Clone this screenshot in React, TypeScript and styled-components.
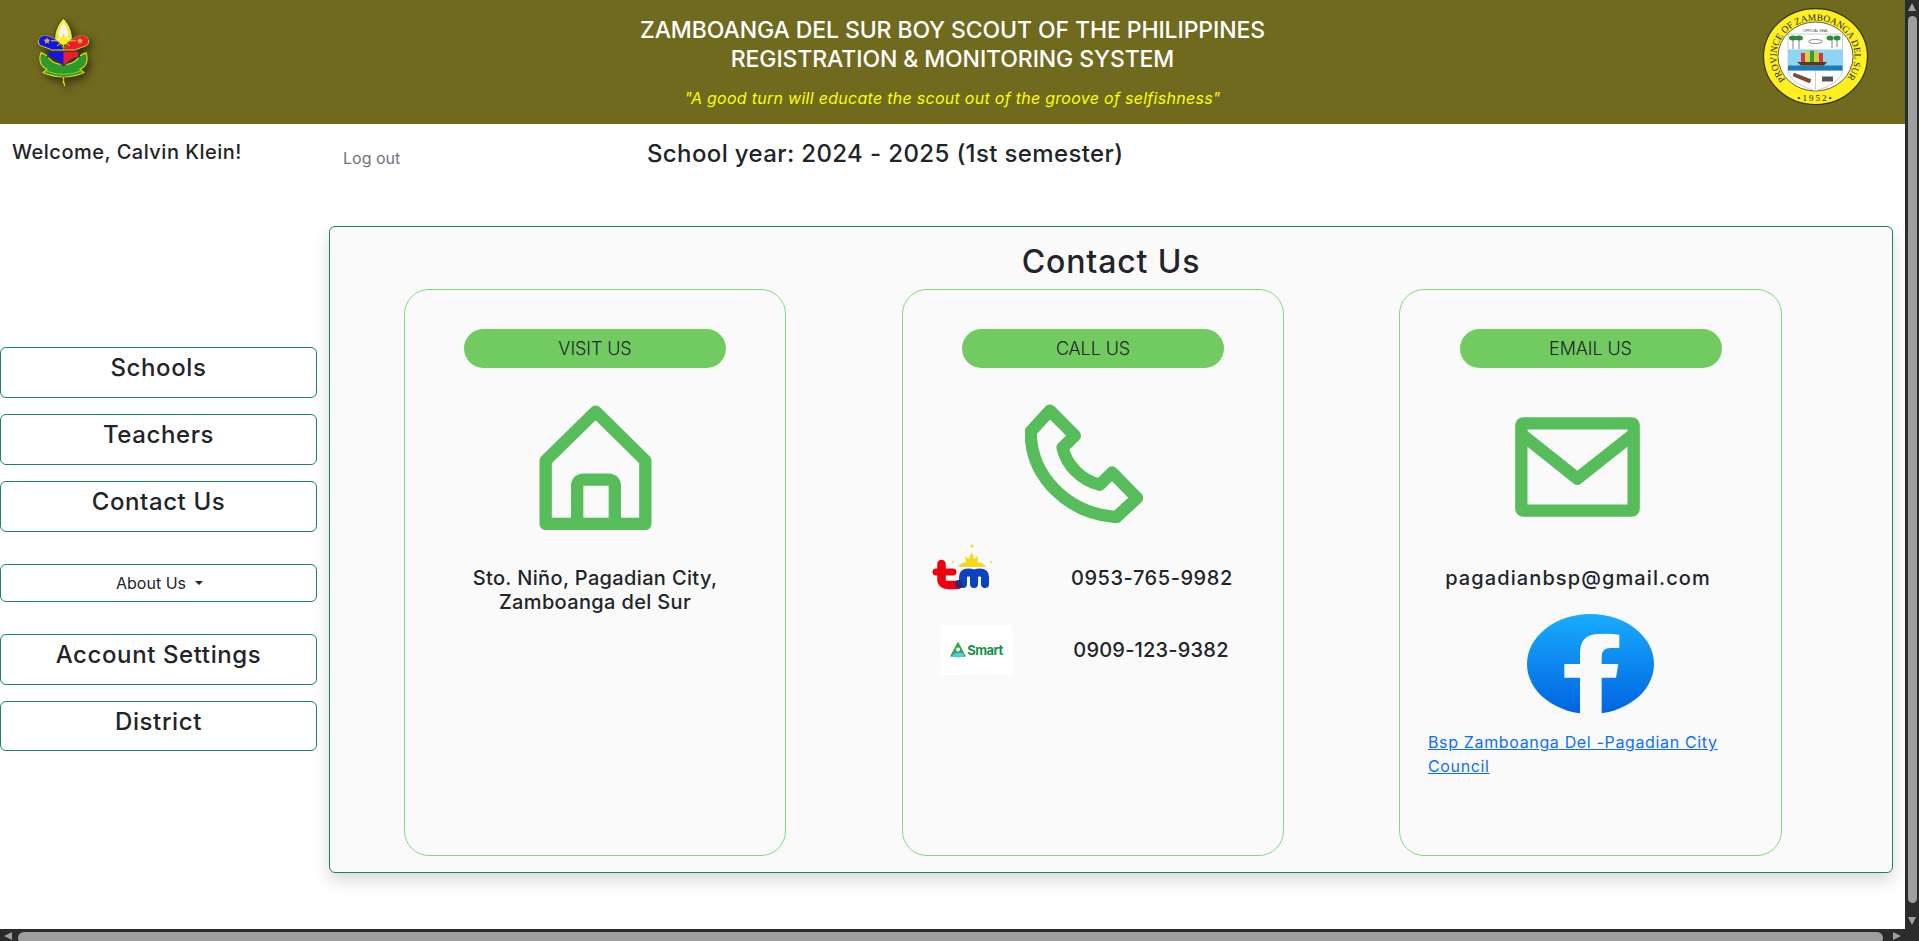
import React from "react";
import styled, { createGlobalStyle } from "styled-components";

const GlobalStyle = createGlobalStyle`
html, body {
  margin: 0;
  padding: 0;
  height: 100%;
  overflow: hidden;
  background: #fff;
}
* { box-sizing: border-box; }
body {
  font-family: Inter, "Open Sans", sans-serif;
  color: #212529;
}
`;

const Shell = styled.div`
display: grid;
grid-template-columns: 1905px 14px;
grid-template-rows: 929px 12px;
width: 1919px;
height: 941px;
overflow: hidden;
`;

const Page = styled.div`
display: flex;
flex-direction: column;
overflow: hidden;
`;

const VBar = styled.div`
grid-row: 1 / 3;
grid-column: 2;
background: #2b2b2b;
display: flex;
flex-direction: column;
align-items: center;
padding: 3px 0 16px;
`;

const VThumb = styled.div`
width: 9px;
flex: 1;
margin: 5px 0 14px;
background: #9f9f9f;
border-radius: 5px;
`;

const HBar = styled.div`
background: #2b2b2b;
display: flex;
align-items: flex-start;
padding: 3px 4px 0;
`;

const HThumb = styled.div`
height: 12px;
flex: 1;
margin: 0 10px 0 6px;
background: #9f9f9f;
border-radius: 6px;
`;

const Arrow = styled.div<{ $dir: "up" | "down" | "left" | "right" }>`
width: 0;
height: 0;
flex: none;
border-style: solid;
border-color: transparent;
${({ $dir }) =>
  $dir === "up"
    ? "border-width: 0 4.5px 8px; border-bottom-color: #9f9f9f;"
    : $dir === "down"
    ? "border-width: 8px 4.5px 0; border-top-color: #9f9f9f;"
    : $dir === "left"
    ? "border-width: 4.5px 8px 4.5px 0; border-right-color: #9f9f9f;"
    : "border-width: 4.5px 0 4.5px 8px; border-left-color: #9f9f9f;"}
`;

const Header = styled.header`
height: 124px;
flex: none;
background: #706a1f;
display: grid;
grid-template-columns: 1fr auto 1fr;
align-items: start;
padding: 0 37px;
`;

const BspLogo = styled.svg`
width: 53px;
height: 71px;
margin-top: 17px;
filter: drop-shadow(3px 4px 4px rgba(0, 0, 0, 0.55));
`;

const SealLogo = styled.svg`
width: 105px;
height: 97px;
margin-top: 8px;
justify-self: end;
`;

const HeaderText = styled.div`
display: flex;
flex-direction: column;
align-items: center;
color: #fff;
padding-top: 16px;
`;

const HeaderTitle = styled.h1`
margin: 0;
font-size: 23px;
line-height: 29px;
font-weight: 500;
text-align: center;
letter-spacing: -0.1px;
`;

const Motto = styled.p`
margin: 12px 0 0;
font-size: 16px;
line-height: 24px;
font-style: italic;
color: #ffff00;
letter-spacing: 0.28px;
`;

const Body = styled.div`
display: flex;
flex: 1;
`;

const Sidebar = styled.aside`
width: 318px;
flex: none;
`;

const Welcome = styled.div`
height: 223px;
padding: 15px 0 0 12px;
font-size: 20px;
line-height: 27px;
font-weight: 500;
letter-spacing: 0.5px;
`;

const NavList = styled.nav`
display: flex;
flex-direction: column;
gap: 16px;
`;

const NavButton = styled.a<{ $short?: boolean }>`
display: block;
height: ${({ $short }) => ($short ? 50 : 51)}px;
width: 317px;
border: 1px solid #198754;
border-radius: 6px;
text-align: center;
font-size: 24px;
line-height: 29px;
font-weight: 500;
letter-spacing: 0.6px;
padding-top: 5px;
color: #212529;
`;

const AboutButton = styled.button`
display: flex;
align-items: center;
justify-content: center;
gap: 9px;
height: 38px;
width: 317px;
margin: 16px 0;
background: #fff;
border: 1px solid #198754;
border-radius: 6px;
font-family: inherit;
font-size: 16px;
color: #212529;
padding: 0 0 0 2px;
`;

const Caret = styled.span`
width: 0;
height: 0;
border-style: solid;
border-width: 4.5px 4.5px 0;
border-color: #212529 transparent transparent;
`;

const Main = styled.main`
flex: 1;
padding-left: 11px;
`;

const TopRow = styled.div`
height: 102px;
display: flex;
align-items: flex-start;
padding-left: 14px;
`;

const LogOut = styled.a`
width: 304px;
margin-top: 22px;
font-size: 16px;
line-height: 24px;
color: #6c757d;
`;

const SchoolYear = styled.div`
margin-top: 15px;
font-size: 24px;
line-height: 29px;
font-weight: 500;
letter-spacing: 0.37px;
`;

const ContactPanel = styled.section`
width: 1564px;
height: 647px;
background: #fafafa;
border: 1px solid #198754;
border-radius: 6px;
box-shadow: 0 8px 16px rgba(0, 0, 0, 0.15);
padding-top: 16px;
`;

const PanelTitle = styled.h2`
margin: 0 0 8px;
font-size: 32px;
line-height: 38px;
font-weight: 500;
letter-spacing: 0.85px;
text-align: center;
`;

const CardRow = styled.div`
display: flex;
gap: 116px;
padding-left: 74px;
`;

const Card = styled.article<{ $pull?: number }>`
width: ${({ $pull }) => 382 + ($pull ?? 0)}px;
margin-left: ${({ $pull }) => -($pull ?? 0)}px;
height: 567px;
border: 1px solid #7ddc7a;
border-radius: 25px;
padding-top: 39px;
`;

const Pill = styled.div`
width: 262px;
height: 39px;
margin: 0 auto;
background: #72cb60;
border-radius: 20px;
text-align: center;
font-size: 18px;
line-height: 39px;
font-weight: 300;
letter-spacing: -0.1px;
`;

const IconSlot = styled.div<{ $height: number; $shift?: number; $top?: number }>`
height: ${({ $height }) => $height}px;
display: flex;
align-items: center;
justify-content: center;
margin-right: ${({ $shift }) => $shift ?? 0}px;
padding-top: ${({ $top }) => $top ?? 0}px;
`;

const InfoText = styled.p<{ $spacing?: number }>`
margin: 0;
font-size: 20px;
line-height: 24px;
font-weight: 500;
text-align: center;
white-space: nowrap;
letter-spacing: ${({ $spacing }) => $spacing ?? 0.35}px;
`;

const PhoneRow = styled.div<{ $mt?: number }>`
display: flex;
align-items: center;
margin-top: ${({ $mt }) => $mt ?? 0}px;
`;

const LogoCell = styled.div<{ $pad: number }>`
width: 168px;
flex: none;
display: flex;
padding-left: ${({ $pad }) => $pad}px;
`;

const PhoneNumber = styled.div<{ $mt?: number; $spacing?: number }>`
width: 160px;
margin-top: ${({ $mt }) => $mt ?? 0}px;
font-size: 20px;
line-height: 24px;
font-weight: 500;
text-align: center;
white-space: nowrap;
letter-spacing: ${({ $spacing }) => $spacing ?? 0.2}px;
`;

const SmartBox = styled.div`
width: 71px;
height: 50px;
background: #fff;
display: flex;
align-items: center;
justify-content: center;
gap: 1px;
color: #17924a;
font-size: 13px;
font-weight: 700;
letter-spacing: -0.5px;
`;

const EmailColumn = styled.div`
width: 300px;
margin-left: 28px;
`;

const FbLogo = styled.svg`
display: block;
width: 127px;
height: 100px;
margin: 24px 0 0 127px;
`;

const FbLink = styled.a`
display: block;
margin: 16px 0 0 28px;
width: 320px;
font-size: 16px;
line-height: 24px;
letter-spacing: 0.65px;
color: #0d6efd;
text-decoration: underline;
`;

const GREEN = "#56bd5a";

const HouseIcon = () => (
  <svg width="113" height="125" viewBox="0 0 337 375" fill="none" stroke={GREEN} strokeWidth="37" strokeLinejoin="round">
    <path d="M169 20 L19 167 V357 H318 V167 Z" />
    <path d="M113.500 357 V244 Q113.500 224 133 224 H207 Q226.500 224 226.500 244 V357" />
  </svg>
);

const PhoneIcon = () => (
  <svg width="118" height="119" viewBox="0 0 355 358" fill="none" stroke={GREEN} strokeWidth="37" strokeLinejoin="round">
    <path d="M75 20 L150 95 L113 131 C125 185 170 230 225 243 L262 206 L337 283 L275 340 C130 330 17 220 17 83 Z" />
  </svg>
);

const MailIcon = () => (
  <svg width="125" height="100" viewBox="0 0 375 300" fill="none" stroke={GREEN} strokeWidth="37" strokeLinejoin="round">
    <rect x="19" y="19" width="337" height="262" rx="6" />
    <path d="M19 51 L187 185 L356 51" />
  </svg>
);

const TmLogo = () => (
  <svg width="61" height="46" viewBox="0 0 61 46" fill="none" strokeLinecap="round">
    <g fill="#f2dc17">
      <path d="M26 23 L30 19 L34 18 L33 12 L36.500 15 L40 8 L42 15 L46 12 L45.500 18 L50 19 L54 23 Z" />
      <circle cx="40" cy="2" r="1.500" />
      <circle cx="21" cy="18" r="1" />
      <circle cx="59" cy="18" r="1" />
    </g>
    <path d="M9.500 20 V35 Q9.500 41 16 41 H26" stroke="#ee0010" strokeWidth="8.500" />
    <path d="M4 28 H21" stroke="#ee0010" strokeWidth="7" />
    <path d="M31 40 V33 Q31 28.500 36.500 28.500 Q42 28.500 42 33 V40 M42 33 Q42 28.500 47.500 28.500 Q53 28.500 53 33 V40" stroke="#0a42c0" strokeWidth="8" />
    <circle cx="27" cy="40" r="4" fill="#2b2a78" />
  </svg>
);

const SmartMark = () => (
  <svg width="16" height="16" viewBox="0 0 16 16">
    <path d="M8 1 L15 14 H1 Z" fill="#35a84a" stroke="#35a84a" strokeWidth="1.500" strokeLinejoin="round" />
    <path d="M2 13 Q8 9 15 12 Q12 16 8 15.500 Q4 16 2 13 Z" fill="#5cc3e6" />
    <circle cx="8" cy="7.500" r="2" fill="#fff" />
  </svg>
);

const FacebookIcon = () => (
  <FbLogo viewBox="0 0 381 300">
    <defs>
      <linearGradient id="fbGrad" x1="0" y1="0" x2="0" y2="1">
        <stop offset="0" stopColor="#18acfe" />
        <stop offset="1" stopColor="#0163e0" />
      </linearGradient>
    </defs>
    <ellipse cx="190.500" cy="150" rx="190.500" ry="150" fill="url(#fbGrad)" />
    <path
      d="M159 300 V191 H112 V150 H159 V118 Q159 60 215 60 Q250 58 277 62 V102 H250 Q224 102 224 128 V150 H274 L267 191 H224 V300 Z"
      fill="#fafafa"
    />
  </FbLogo>
);

// scout emblem, coordinates taken from a 3x crop of the header
const BspEmblem = () => (
  <BspLogo viewBox="0 0 160 215">
    <path d="M12 108 C4 130 10 150 30 158 L18 168 Q80 195 142 168 L130 158 C150 150 156 130 148 108 L128 118 C118 138 92 148 80 140 C68 148 42 138 32 118 Z" fill="#2c9a2c" stroke="#e5dc15" strokeWidth="3.500" />
    <path d="M24 162 Q80 186 136 162" fill="none" stroke="#e5dc15" strokeWidth="2" />
    <path d="M30 102 H130 V122 C112 122 100 132 80 150 C60 132 48 122 30 122 Z" fill="#3a3a2a" />
    <path d="M36 106 H80 V146 C68 136 56 122 36 120 Z" fill="#1414ea" />
    <path d="M124 106 H80 V146 C92 136 104 122 124 120 Z" fill="#ee1c2e" />
    <path d="M80 3 C60 24 50 50 54 78 H106 C110 50 100 24 80 3 Z" fill="#f0ea30" stroke="#222" strokeWidth="2.500" />
    <path d="M80 16 C68 32 62 52 64 72 H96 C98 52 92 32 80 16 Z" fill="#f6f3ea" />
    <path d="M80 96 C62 62 14 40 4 70 C1 92 24 88 44 100 H80 Z" fill="#1414ea" stroke="#e5dc15" strokeWidth="3" />
    <path d="M80 96 C98 62 146 40 156 70 C159 92 136 88 116 100 H80 Z" fill="#ee1c2e" stroke="#e5dc15" strokeWidth="3" />
    <path d="M4 70 C14 40 62 62 80 96 C98 62 146 40 156 70" fill="none" stroke="#222" strokeWidth="1.500" />
    <path d="M42 72 H118 M80 52 V92 M60 56 L100 88 M100 56 L60 88" stroke="#e2d224" strokeWidth="3" />
    <circle cx="80" cy="72" r="12" fill="#ffee10" />
    <path d="M30 62 L33 68 L40 69 L35 74 L36 81 L30 77 L24 81 L25 74 L20 69 L27 68 Z" fill="#c8b83a" />
    <path d="M130 62 L133 68 L140 69 L135 74 L136 81 L130 77 L124 81 L125 74 L120 69 L127 68 Z" fill="#c8b83a" />
    <path d="M76 180 Q80 192 76 198 Q84 205 78 212 H84 Q88 204 84 198 Q82 190 84 180 Z" fill="#e5dc15" stroke="#222" strokeWidth="1.500" />
  </BspLogo>
);

const ProvinceSeal = () => (
  <SealLogo viewBox="0 0 210 194">
    <defs>
      <path id="sealArc" d="M45 143 A78 72 0 1 1 165 143" />
    </defs>
    <ellipse cx="105" cy="97" rx="104" ry="96" fill="#ffef1e" stroke="#333" strokeWidth="2.500" />
    <ellipse cx="105" cy="97" rx="75" ry="69" fill="#fff" stroke="#333" strokeWidth="1.500" />
    <text fontFamily="Liberation Serif, serif" fontSize="19" fill="#222">
      <textPath href="#sealArc" textLength="332" lengthAdjust="spacingAndGlyphs">
        PROVINCE OF ZAMBOANGA DEL SUR
      </textPath>
    </text>
    <text x="105" y="186" textAnchor="middle" fontFamily="Liberation Serif, serif" fontSize="18" fill="#222" letterSpacing="4">
      •1952•
    </text>
    <text x="105" y="47" textAnchor="middle" fontFamily="Liberation Sans, sans-serif" fontSize="7" fill="#444">
      OFFICIAL SEAL
    </text>
    <path d="M50 52 H159 V125 Q158 150 105 166 Q52 150 50 125 Z" fill="#fff" stroke="#999" strokeWidth="1" />
    <rect x="50" y="83" width="109" height="42" fill="#8ed4f5" />
    <rect x="50" y="115" width="109" height="10" fill="#1c7bb5" />
    <g fill="#2d8a3a">
      <ellipse cx="60" cy="60" rx="8" ry="5" />
      <ellipse cx="72" cy="60" rx="8" ry="5" />
      <ellipse cx="134" cy="60" rx="7" ry="5" />
      <ellipse cx="148" cy="60" rx="7" ry="5" />
    </g>
    <path d="M60 62 V82 M72 62 V82 M138 62 V80 M148 62 V78" stroke="#555" strokeWidth="1.500" />
    <ellipse cx="105" cy="67" rx="14" ry="4" fill="none" stroke="#666" strokeWidth="1.500" />
    <path d="M68 108 H128 L122 115 H76 Z" fill="#5a3a1e" />
    <g>
      <rect x="76" y="90" width="8" height="18" fill="#d33" />
      <rect x="85" y="87" width="8" height="21" fill="#e3d31f" />
      <rect x="94" y="85" width="8" height="23" fill="#3a9a3a" />
      <rect x="103" y="87" width="8" height="21" fill="#e3c81f" />
      <rect x="112" y="90" width="8" height="18" fill="#d33" />
    </g>
    <path d="M62 130 L96 143 L93 150 L60 136 Z" fill="#8a4a28" stroke="#333" strokeWidth="0.800" />
    <rect x="118" y="137" width="22" height="10" fill="#555" />
    <path d="M105 125 V165" stroke="#999" strokeWidth="1" />
  </SealLogo>
);

const App = () => {
  return (
    <>
      <GlobalStyle />
      <Shell>
        <Page>
          <Header>
            <BspEmblem />
            <HeaderText>
              <HeaderTitle>
                ZAMBOANGA DEL SUR BOY SCOUT OF THE PHILIPPINES
                <br />
                REGISTRATION &amp; MONITORING SYSTEM
              </HeaderTitle>
              <Motto>"A good turn will educate the scout out of the groove of selfishness"</Motto>
            </HeaderText>
            <ProvinceSeal />
          </Header>
          <Body>
            <Sidebar>
              <Welcome>Welcome, Calvin Klein!</Welcome>
              <NavList>
                <NavButton>Schools</NavButton>
                <NavButton>Teachers</NavButton>
                <NavButton>Contact Us</NavButton>
                <AboutButton>
                  About Us <Caret />
                </AboutButton>
                <NavButton>Account Settings</NavButton>
                <NavButton $short>District</NavButton>
              </NavList>
            </Sidebar>
            <Main>
              <TopRow>
                <LogOut>Log out</LogOut>
                <SchoolYear>School year: 2024 - 2025 (1st semester)</SchoolYear>
              </TopRow>
              <ContactPanel>
                <PanelTitle>Contact Us</PanelTitle>
                <CardRow>
                  <Card>
                    <Pill>VISIT US</Pill>
                    <IconSlot $height={198}>
                      <HouseIcon />
                    </IconSlot>
                    <InfoText>
                      Sto. Niño, Pagadian City,
                      <br />
                      Zamboanga del Sur
                    </InfoText>
                  </Card>
                  <Card>
                    <Pill>CALL US</Pill>
                    <IconSlot $height={176} $shift={18} $top={15}>
                      <PhoneIcon />
                    </IconSlot>
                    <PhoneRow>
                      <LogoCell $pad={29}>
                        <TmLogo />
                      </LogoCell>
                      <PhoneNumber $mt={22} $spacing={0.55}>
                        0953-765-9982
                      </PhoneNumber>
                    </PhoneRow>
                    <PhoneRow $mt={35}>
                      <LogoCell $pad={38}>
                        <SmartBox>
                          <SmartMark />
                          Smart
                        </SmartBox>
                      </LogoCell>
                      <PhoneNumber>0909-123-9382</PhoneNumber>
                    </PhoneRow>
                  </Card>
                  <Card $pull={1}>
                    <Pill>EMAIL US</Pill>
                    <EmailColumn>
                      <IconSlot $height={198} $shift={2}>
                        <MailIcon />
                      </IconSlot>
                      <InfoText $spacing={1.1}>pagadianbsp@gmail.com</InfoText>
                    </EmailColumn>
                    <FacebookIcon />
                    <FbLink>Bsp Zamboanga Del -Pagadian City Council</FbLink>
                  </Card>
                </CardRow>
              </ContactPanel>
            </Main>
          </Body>
        </Page>
        <VBar>
          <Arrow $dir="up" />
          <VThumb />
          <Arrow $dir="down" />
        </VBar>
        <HBar>
          <Arrow $dir="left" />
          <HThumb />
          <Arrow $dir="right" />
        </HBar>
      </Shell>
    </>
  );
};

export default App;
